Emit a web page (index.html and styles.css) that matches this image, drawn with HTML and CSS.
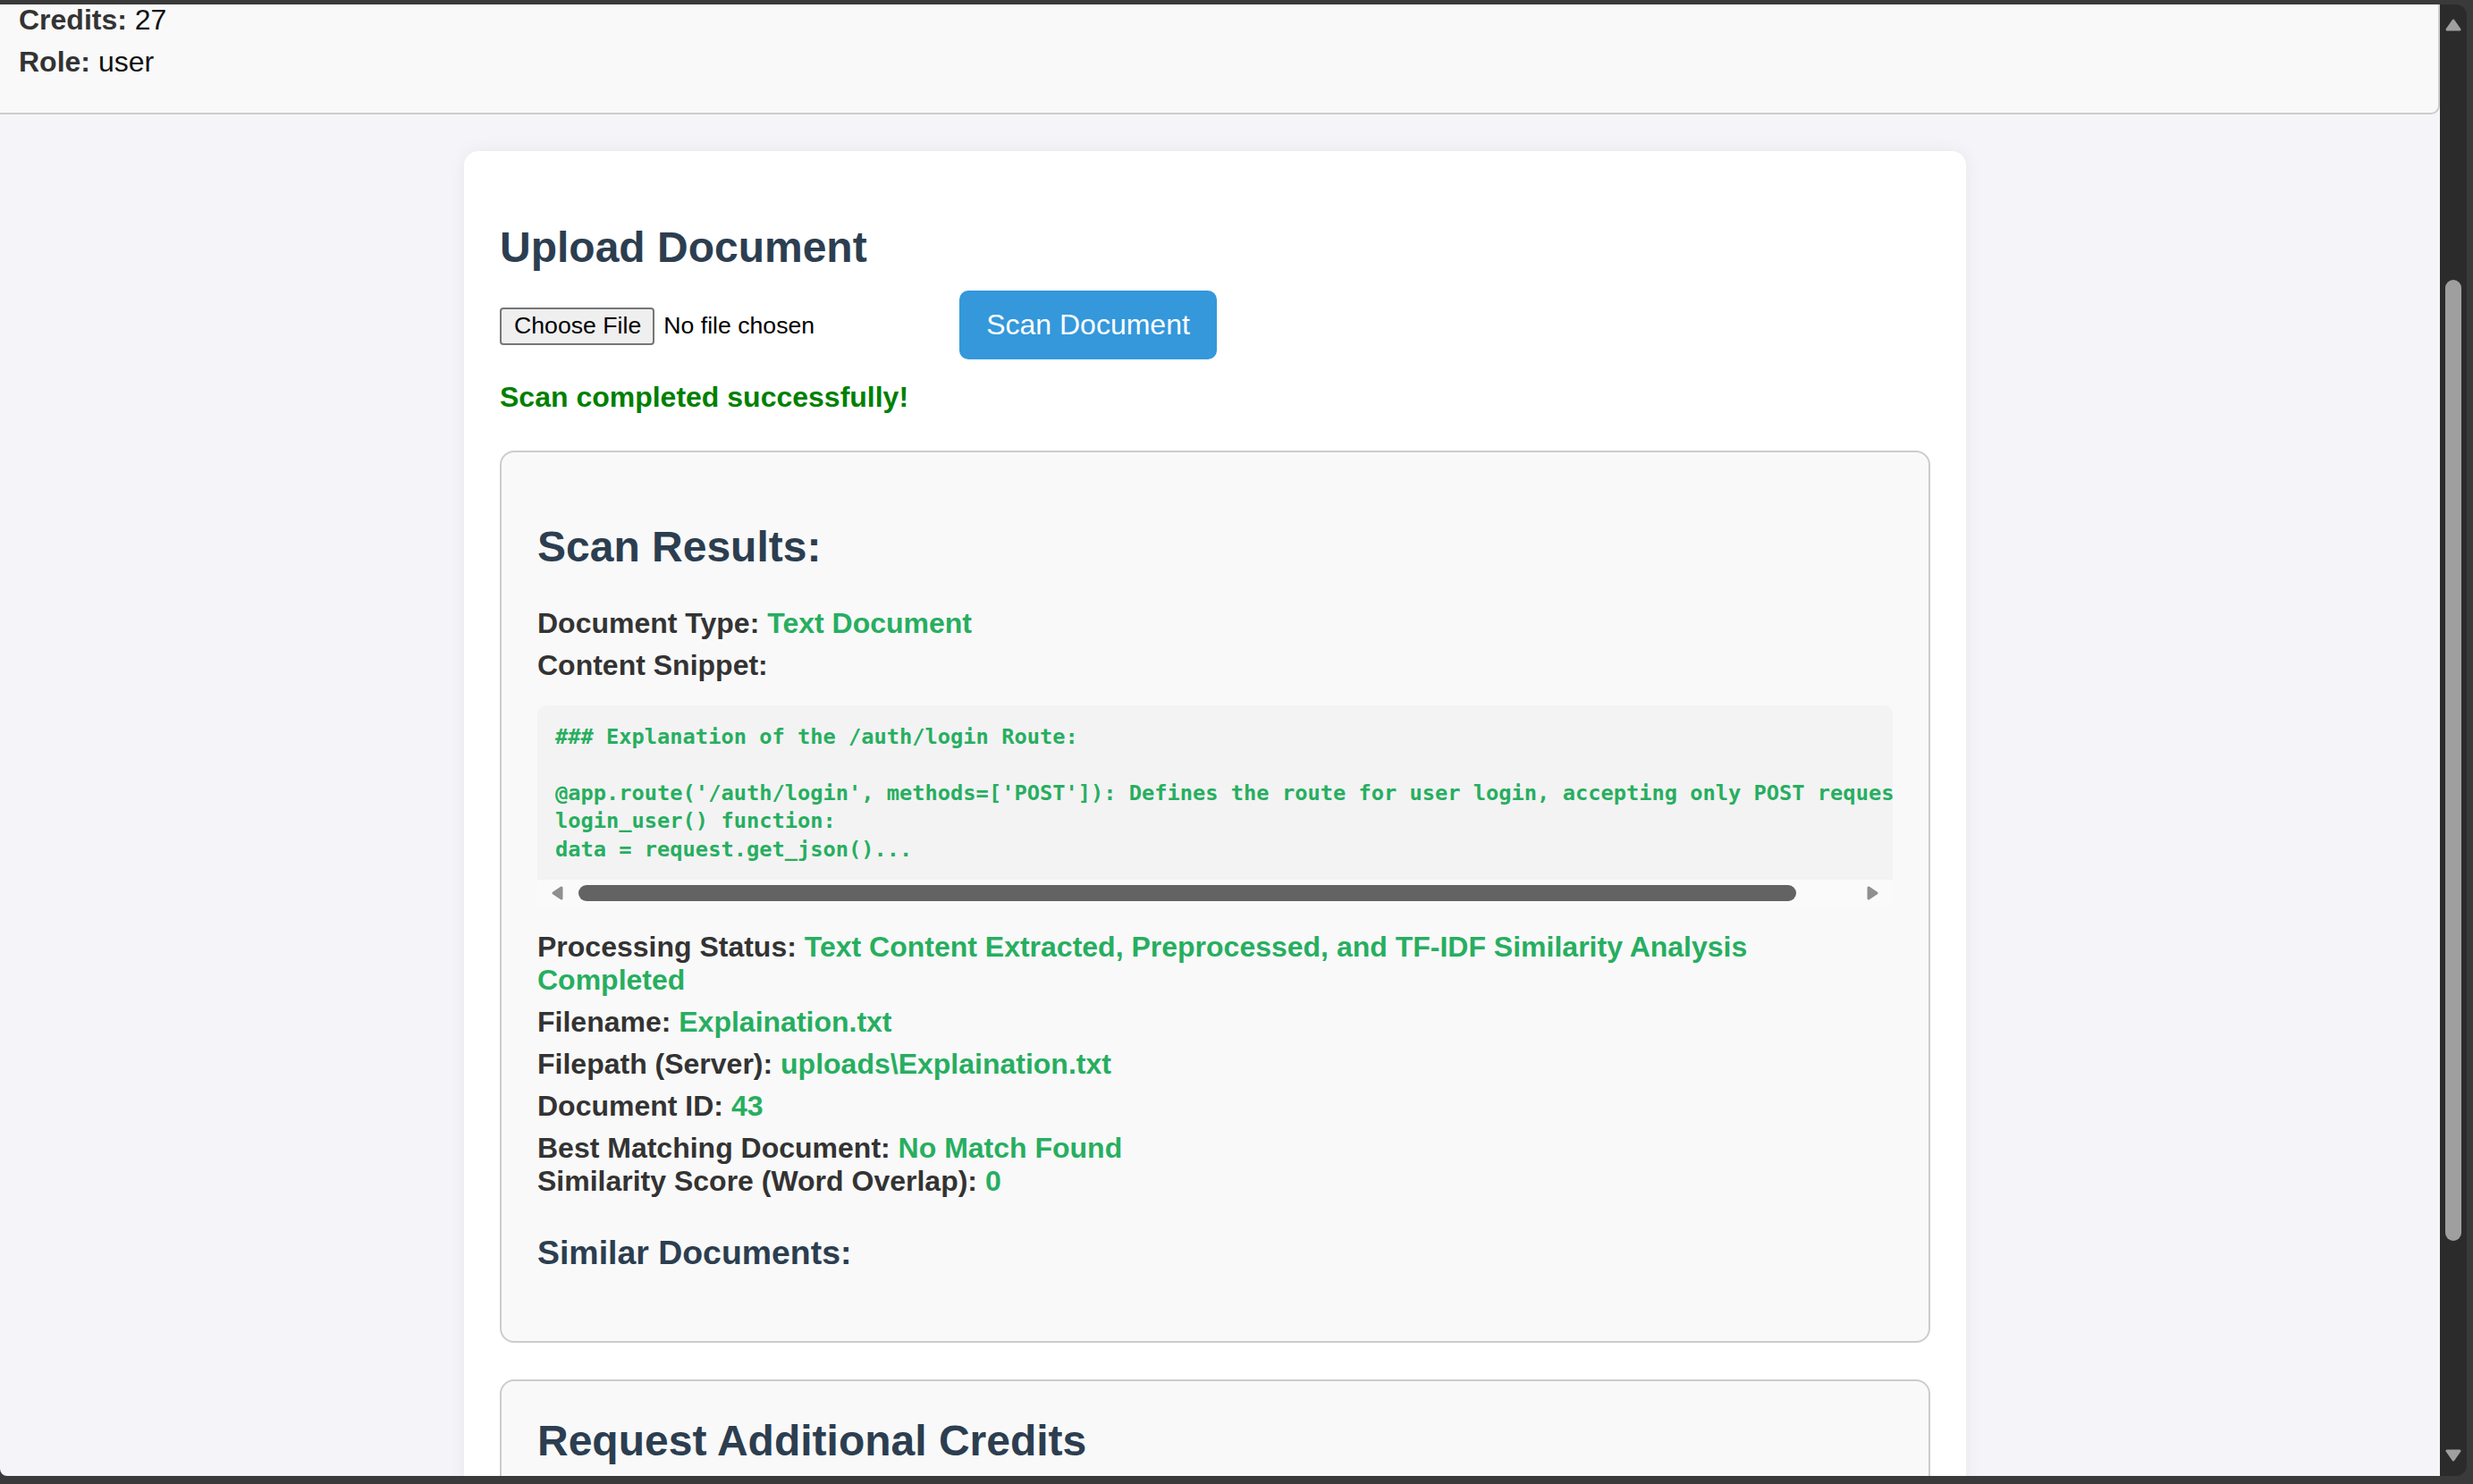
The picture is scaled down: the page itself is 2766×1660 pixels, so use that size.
FILE: index.html
```html
<!DOCTYPE html>
<html lang="en">
<head>
<meta charset="utf-8">
<title>Upload Document</title>
<link rel="stylesheet" href="styles.css">
</head>
<body>
<div class="topbar"></div>
<div class="viewport">
  <div class="page">
    <header class="userbar">
      <p class="userline"><strong>Credits:</strong> 27</p>
      <p class="userline second"><strong>Role:</strong> user</p>
    </header>
    <main class="main">
      <section class="card">
        <h2 class="title">Upload Document</h2>
        <form class="upload-row">
          <div class="file-input">
            <span class="file-btn">Choose File</span>
            <span class="file-name">No file chosen</span>
          </div>
          <button class="scan-btn" type="button">Scan Document</button>
        </form>
        <p class="success">Scan completed successfully!</p>

        <div class="panel results">
          <h2 class="panel-title">Scan Results:</h2>
          <p class="field">Document Type: <span class="val">Text Document</span></p>
          <p class="field">Content Snippet:</p>
          <div class="snippet">
<pre class="code">### Explanation of the /auth/login Route:

@app.route('/auth/login', methods=['POST']): Defines the route for user login, accepting only POST requests.
login_user() function:
data = request.get_json()...</pre>
            <div class="hscroll">
              <svg class="harrow" width="13" height="16" viewBox="0 0 13 16"><polygon points="11,2 11,14 2,8" fill="#8f8f8f" stroke="#8f8f8f" stroke-width="3" stroke-linejoin="round"/></svg>
              <div class="hthumb"></div>
              <svg class="harrow right" width="13" height="16" viewBox="0 0 13 16"><polygon points="2,2 2,14 11,8" fill="#8f8f8f" stroke="#8f8f8f" stroke-width="3" stroke-linejoin="round"/></svg>
            </div>
          </div>
          <p class="field">Processing Status: <span class="val">Text Content Extracted, Preprocessed, and TF-IDF Similarity Analysis Completed</span></p>
          <p class="field">Filename: <span class="val">Explaination.txt</span></p>
          <p class="field">Filepath (Server): <span class="val">uploads\Explaination.txt</span></p>
          <p class="field">Document ID: <span class="val">43</span></p>
          <p class="field">Best Matching Document: <span class="val">No Match Found</span><br>Similarity Score (Word Overlap): <span class="val">0</span></p>
          <h3 class="sub-title">Similar Documents:</h3>
        </div>

        <div class="panel request">
          <h2 class="panel-title first">Request Additional Credits</h2>
          <p class="field">Current credits are running low? Submit a request to the admin.</p>
        </div>
      </section>
    </main>
  </div>
  <div class="vscroll">
    <svg class="varrow" width="18" height="14" viewBox="0 0 18 14"><polygon points="9,2 16,12 2,12" fill="#a0a0a0" stroke="#a0a0a0" stroke-width="3" stroke-linejoin="round"/></svg>
    <div class="vthumb"></div>
    <svg class="varrow down" width="18" height="14" viewBox="0 0 18 14"><polygon points="2,2 16,2 9,12" fill="#a0a0a0" stroke="#a0a0a0" stroke-width="3" stroke-linejoin="round"/></svg>
  </div>
</div>
<div class="bottombar"></div>
</body>
</html>
```

FILE: styles.css
```css
* { box-sizing: border-box; }

html, body {
  margin: 0;
  padding: 0;
}

body {
  width: 2766px;
  height: 1660px;
  overflow: hidden;
  background: #3a3a3a;
  display: flex;
  flex-direction: column;
  font-family: "Liberation Sans", Arial, sans-serif;
}

.topbar {
  flex: none;
  height: 5px;
}

.viewport {
  flex: none;
  height: 1646px;
  display: flex;
}

.page {
  flex: none;
  width: 2729px;
  height: 1646px;
  background: #f4f4f9;
  overflow: hidden;
  border-bottom-left-radius: 8px;
}

.bottombar {
  flex: none;
  height: 9px;
}

/* header */
.userbar {
  height: 124px;
  background: #f9f9f9;
  border-right: 2px solid #cccccc;
  border-bottom: 2px solid #cccccc;
  border-bottom-right-radius: 10px;
  padding: 0 21px;
  font-size: 32px;
  color: #111;
}

.userline {
  margin: -1.5px 0 0;
}

.userline.second {
  margin-top: 10px;
}

.userline strong {
  color: #333;
}

/* main */
.main {
  display: flex;
  justify-content: center;
  padding: 41px 11px 0 0;
}

.card {
  flex: none;
  width: 1680px;
  padding: 40px;
  background: #ffffff;
  border-radius: 16px;
  box-shadow: 0 0 20px rgba(0, 0, 0, 0.06);
}

.title {
  font-size: 48px;
  font-weight: bold;
  color: #2c3e50;
  margin: 40.5px 0 20.5px;
}

.upload-row {
  display: flex;
  align-items: flex-start;
  margin: 0;
}

.file-input {
  flex: none;
  width: 514px;
  margin-top: 19px;
  display: flex;
  align-items: center;
  font-size: 26.67px;
  color: #000;
}

.file-btn {
  height: 42px;
  display: flex;
  align-items: center;
  padding: 0 13px 0 14px;
  border: 2px solid #767676;
  border-radius: 4px;
  background: #efefef;
}

.file-name {
  margin-left: 10px;
}

.scan-btn {
  flex: none;
  width: 288px;
  height: 77px;
  padding: 0;
  border: 0;
  border-radius: 10px;
  background: #3498db;
  color: #ffffff;
  font-family: "Liberation Sans", Arial, sans-serif;
  font-size: 32px;
}

.success {
  margin: 24.5px 0 0;
  font-size: 32px;
  font-weight: bold;
  color: #008000;
}

/* panels */
.panel {
  background: #f9f9f9;
  border: 2px solid #cccccc;
  border-radius: 16px;
  padding: 40px;
}

.results {
  margin-top: 41px;
}

.request {
  margin-top: 41px;
  padding-top: 39px;
}

.panel-title {
  font-size: 48px;
  font-weight: bold;
  color: #2c3e50;
  margin: 38px 0 39.84px;
}

.panel-title.first {
  margin-top: 0;
}

.field {
  margin: 10px 0;
  font-size: 32px;
  font-weight: bold;
  color: #333333;
}

.val {
  color: #27ae60;
}

.snippet {
  margin: 26.67px 0;
  border-radius: 10px 10px 0 0;
  overflow: hidden;
}

.code {
  margin: 0;
  padding: 19.1px 20px 18.4px;
  background: #f3f3f3;
  color: #27ae60;
  font-family: "DejaVu Sans Mono", "Liberation Mono", monospace;
  font-weight: bold;
  font-size: 23.7px;
  line-height: 31.5px;
  white-space: pre;
  overflow: hidden;
}

.hscroll {
  height: 30px;
  background: #fafafa;
  display: flex;
  align-items: center;
  padding: 0 16px;
}

.harrow {
  flex: none;
  display: block;
}

.harrow.right {
  margin-left: auto;
}

.hthumb {
  flex: none;
  width: 1362px;
  height: 18px;
  margin-left: 17px;
  border-radius: 9px;
  background: #636363;
}

.sub-title {
  font-size: 37.44px;
  font-weight: bold;
  color: #2c3e50;
  margin: 40px 0 37px;
}

/* vertical scrollbar */
.vscroll {
  flex: none;
  width: 30px;
  height: 1646px;
  background: #2b2b2b;
  border-radius: 0 12px 12px 0;
  display: flex;
  flex-direction: column;
  align-items: center;
}

.varrow {
  flex: none;
  display: block;
  margin-top: 16px;
}

.vthumb {
  flex: none;
  width: 18px;
  height: 1075px;
  margin-top: 278px;
  border-radius: 9px;
  background: #9f9f9f;
}

.varrow.down {
  margin-top: 233px;
}
```
